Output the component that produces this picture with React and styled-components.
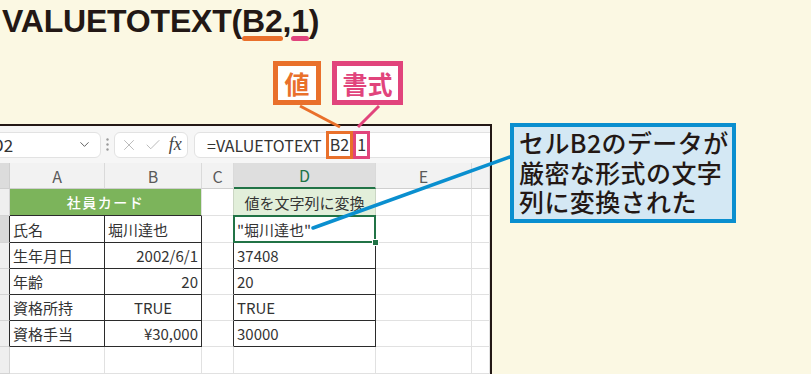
import React from 'react';
import styled, { createGlobalStyle } from 'styled-components';
import { ChevronDown, X, Check } from 'lucide-react';

const GlobalStyle = createGlobalStyle`
  body {
    margin: 0;
    font-family: "Noto Sans CJK JP", "Noto Sans", sans-serif;
  }
`;

const ORANGE = '#e9702b';
const PINK = '#e1447c';
const BLUE = '#0a8fcf';
const DARK = '#2b2b2b';
const GRID = '#e1e1e1';
const GREEN = '#217346';

const Page = styled.div`
  position: relative;
  width: 811px;
  height: 374px;
  overflow: hidden;
  background: #fbf8e3;
`;

const Title = styled.h1`
  margin: 0;
  padding: 3px 0 0 2px;
  font: bold 32px/37px "Liberation Sans", Arial, sans-serif;
  letter-spacing: -0.2px;
  color: #231815;
`;

const Mark = styled.span`
  position: relative;
  &::after {
    content: '';
    position: absolute;
    left: 0;
    right: 0;
    bottom: -2px;
    height: 5px;
    border-radius: 3px;
    background: ${p => p.$color};
  }
`;

const Tags = styled.div`
  display: flex;
  gap: 11px;
  margin-top: 21px;
  padding-left: 273px;
`;

const Tag = styled.div`
  width: ${p => p.$w}px;
  height: 44px;
  box-sizing: border-box;
  border: 5px solid ${p => p.$color};
  background: #fff;
  color: ${p => p.$color};
  display: flex;
  align-items: center;
  justify-content: center;
  font: bold 25px/1 "Noto Sans CJK JP", sans-serif;
`;

const Main = styled.div`
  display: flex;
  align-items: flex-start;
  margin-top: 19px;
`;

const Sheet = styled.div`
  width: 492px;
  height: 250px;
  box-sizing: border-box;
  border-top: 2px solid #231815;
  border-right: 2px solid #231815;
  background: #fff;
  overflow: hidden;
`;

const FormulaBar = styled.div`
  height: 37px;
  display: flex;
  align-items: center;
  background: #f6f6f6;
  font-size: 16px;
  color: #333;
`;

const WhiteBox = styled.div`
  height: 26px;
  box-sizing: border-box;
  background: #fff;
  border: 1px solid #e2e2e2;
  border-radius: 6px;
  display: flex;
  align-items: center;
`;

const NameBox = styled(WhiteBox)`
  margin-left: -15px;
  width: 116px;
  padding: 0 8px 0 6px;
  justify-content: space-between;
  font-size: 17px;
`;

const Dots = styled.div`
  width: 13px;
  display: flex;
  justify-content: center;
`;

const ActionBox = styled(WhiteBox)`
  width: 74px;
  justify-content: space-around;
  padding: 0 2px;
`;

const Fx = styled.span`
  font: italic 18px "Liberation Serif", serif;
  color: #444;
`;

const FormulaBox = styled(WhiteBox)`
  flex: 1;
  margin-left: 6px;
  margin-right: -12px;
  padding-left: 12px;
  white-space: nowrap;
`;

const Hl = styled.span`
  display: inline-block;
  height: 28px;
  box-sizing: border-box;
  border: 3px solid ${p => p.$color};
  line-height: 21px;
  padding: 0 1px;
  margin-left: ${p => p.$ml || 0}px;
`;

const Grid = styled.table`
  width: 490px;
  border-collapse: separate;
  border-spacing: 0;
  table-layout: fixed;
  font-size: 15px;
  color: #333;
`;

const Row = styled.tr`
  height: ${p => p.$h}px;
`;

const Cell = styled.td`
  box-sizing: border-box;
  padding: 0 3px;
  border-right: 1px solid ${p => p.$r || GRID};
  border-bottom: ${p => p.$bw || 1}px solid ${p => p.$b || GRID};
  background: ${p => p.$bg || '#fff'};
  color: ${p => p.$color || '#333'};
  text-align: ${p => p.$align || 'left'};
  white-space: nowrap;
  overflow: hidden;
`;

const HeadCell = styled(Cell).attrs({ as: 'th' })`
  font-weight: normal;
  font-size: 16px;
  text-align: center;
  padding: 0;
  color: ${p => p.$color || '#5a5a5a'};
  background: ${p => p.$bg || '#f2f2f2'};
`;

const TitleCell = styled(Cell)`
  font-size: 14px;
  font-weight: 500;
  letter-spacing: 1.5px;
  text-align: center;
`;

const Selected = styled(Cell)`
  position: relative;
  overflow: visible;
  &::after {
    content: '';
    position: absolute;
    top: -1px;
    left: -1px;
    right: -1px;
    bottom: -1px;
    border: 2px solid ${GREEN};
  }
  &::before {
    content: '';
    position: absolute;
    right: -4px;
    bottom: -4px;
    width: 5px;
    height: 5px;
    background: ${GREEN};
    border: 1px solid #fff;
    z-index: 1;
  }
`;

const Callout = styled.div`
  width: 226px;
  height: 100px;
  box-sizing: border-box;
  margin: -1px 0 0 18px;
  padding: 1px 0 0 5px;
  border: 4px solid ${BLUE};
  background: #d4e8f4;
  color: #231815;
  font: 500 25px/29.5px "Noto Sans CJK JP", sans-serif;
  letter-spacing: 0.4px;
  white-space: nowrap;
`;

const Overlay = styled.svg`
  position: absolute;
  left: 0;
  top: 0;
  pointer-events: none;
`;

const cols = [10, 95, 97, 32, 142, 96, 18];

const rows = [
  { a: '氏名', b: '堀川達也', bAlign: 'left', d: '"堀川達也"', h: 27, sel: true },
  { a: '生年月日', b: '2002/6/1', bAlign: 'right', d: '37408', h: 26 },
  { a: '年齢', b: '20', bAlign: 'right', d: '20', h: 26 },
  { a: '資格所持', b: 'TRUE', bAlign: 'center', d: 'TRUE', h: 26 },
  { a: '資格手当', b: '¥30,000', bAlign: 'right', d: '30000', h: 26 },
];

function SheetTable() {
  return (
    <Grid>
      <colgroup>
        {cols.map((w, i) => <col key={i} style={{ width: w }} />)}
      </colgroup>
      <tbody>
        <Row $h={25}>
          <HeadCell $bg="#dcdcdc" $r="#cfcfcf" $b="#cfcfcf" />
          <HeadCell $r="#dadada" $b="#cfcfcf">A</HeadCell>
          <HeadCell $r="#dadada" $b="#cfcfcf">B</HeadCell>
          <HeadCell $r="#dadada" $b="#cfcfcf">C</HeadCell>
          <HeadCell $bg="#dedede" $color={GREEN} $r="#dadada" $b={GREEN} $bw={2}>D</HeadCell>
          <HeadCell $r="#dadada" $b="#cfcfcf">E</HeadCell>
          <HeadCell $r="#dadada" $b="#cfcfcf" />
        </Row>
        <Row $h={27}>
          <Cell $bg="#efefef" $r="#d4d4d4" $b="#d4d4d4" />
          <TitleCell colSpan={2} $bg="#7cb45b" $color="#fff" $b={DARK}>社員カード</TitleCell>
          <Cell $r="#cbd6c4" />
          <Cell $bg="#e2efda" $align="center" $r="#cbd6c4" $b={DARK}>値を文字列に変換</Cell>
          <Cell />
          <Cell />
        </Row>
        {rows.map((r, i) => {
          const D = r.sel ? Selected : Cell;
          return (
            <Row key={i} $h={r.h}>
              <Cell $bg={r.sel ? '#d9d9d9' : '#efefef'} $r={DARK} $b="#d4d4d4" />
              <Cell $r={DARK} $b={DARK}>{r.a}</Cell>
              <Cell $r={DARK} $b={DARK} $align={r.bAlign}>{r.b}</Cell>
              <Cell $r={DARK} />
              <D $r={DARK} $b={DARK}>{r.d}</D>
              <Cell />
              <Cell />
            </Row>
          );
        })}
        <Row $h={27}>
          <Cell $bg="#efefef" $r="#d4d4d4" $b="#d4d4d4" />
          <Cell />
          <Cell />
          <Cell />
          <Cell />
          <Cell />
          <Cell />
        </Row>
      </tbody>
    </Grid>
  );
}

export default function App() {
  return (
    <Page>
      <GlobalStyle />
      <Title>
        VALUETOTEXT(<Mark $color={ORANGE}>B2</Mark>,<Mark $color={PINK}>1</Mark>)
      </Title>
      <Tags>
        <Tag $color={ORANGE} $w={48}>値</Tag>
        <Tag $color={PINK} $w={71}>書式</Tag>
      </Tags>
      <Main>
        <Sheet>
          <FormulaBar>
            <NameBox>
              <span>D2</span>
              <ChevronDown size={15} strokeWidth={1.5} color="#555" />
            </NameBox>
            <Dots>
              <svg width="3" height="13" viewBox="0 0 3 13">
                <circle cx="1.5" cy="1.5" r="1.2" fill="#9a9a9a" />
                <circle cx="1.5" cy="6.5" r="1.2" fill="#9a9a9a" />
                <circle cx="1.5" cy="11.5" r="1.2" fill="#9a9a9a" />
              </svg>
            </Dots>
            <ActionBox>
              <X size={18} strokeWidth={1.2} color="#b3b3b3" />
              <Check size={18} strokeWidth={1.2} color="#b3b3b3" />
              <Fx>fx</Fx>
            </ActionBox>
            <FormulaBox>
              =VALUETOTEXT
              <Hl $color={ORANGE} $ml={4}>B2</Hl>
              <Hl $color={PINK}>1</Hl>
            </FormulaBox>
          </FormulaBar>
          <SheetTable />
        </Sheet>
        <Callout>
          セルB2のデータが<br />
          厳密な形式の文字<br />
          列に変換された
        </Callout>
      </Main>
      <Overlay width="811" height="374" viewBox="0 0 811 374">
        <line x1="300" y1="106" x2="340" y2="127" stroke={ORANGE} strokeWidth="3" />
        <line x1="379" y1="106" x2="358" y2="127" stroke={PINK} strokeWidth="3" />
        <line x1="510" y1="157" x2="313" y2="228" stroke={BLUE} strokeWidth="3.5" strokeLinecap="round" />
      </Overlay>
    </Page>
  );
}
